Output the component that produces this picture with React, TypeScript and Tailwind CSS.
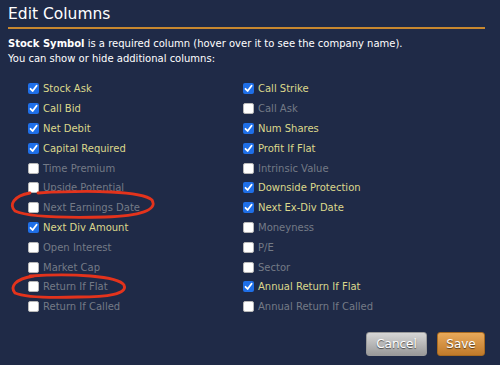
import React from 'react';

type Col = { label: string; on: boolean };

const left: Col[] = [
  { label: 'Stock Ask', on: true },
  { label: 'Call Bid', on: true },
  { label: 'Net Debit', on: true },
  { label: 'Capital Required', on: true },
  { label: 'Time Premium', on: false },
  { label: 'Upside Potential', on: false },
  { label: 'Next Earnings Date', on: false },
  { label: 'Next Div Amount', on: true },
  { label: 'Open Interest', on: false },
  { label: 'Market Cap', on: false },
  { label: 'Return If Flat', on: false },
  { label: 'Return If Called', on: false },
];

const right: Col[] = [
  { label: 'Call Strike', on: true },
  { label: 'Call Ask', on: false },
  { label: 'Num Shares', on: true },
  { label: 'Profit If Flat', on: true },
  { label: 'Intrinsic Value', on: false },
  { label: 'Downside Protection', on: true },
  { label: 'Next Ex-Div Date', on: true },
  { label: 'Moneyness', on: false },
  { label: 'P/E', on: false },
  { label: 'Sector', on: false },
  { label: 'Annual Return If Flat', on: true },
  { label: 'Annual Return If Called', on: false },
];

const Box = ({ on }: { on: boolean }) =>
  on ? (
    <span className="w-[11px] h-[11px] rounded-[2px] bg-[#1f6fe8] flex items-center justify-center shrink-0">
      <svg width="9" height="9" viewBox="0 0 9 9">
        <path d="M1.5 4.8 L3.6 7 L7.6 1.8" stroke="white" strokeWidth="1.8" fill="none" strokeLinecap="round" strokeLinejoin="round" />
      </svg>
    </span>
  ) : (
    <span className="w-[11px] h-[11px] rounded-[2px] bg-white border border-[#b8b8b8] shrink-0" />
  );

const Column = ({ items }: { items: Col[] }) => (
  <div className="flex flex-col">
    {items.map((c) => (
      <label key={c.label} className="h-[19.8px] flex items-center gap-[4px]">
        <Box on={c.on} />
        <span className={c.on ? 'text-[#dcd88c]' : 'text-[#747a86]'}>{c.label}</span>
      </label>
    ))}
  </div>
);

export default function App() {
  return (
    <div
      className="relative w-[500px] h-[365px] bg-[#1f2a47] overflow-hidden text-[10px]"
      style={{ fontFamily: '"DejaVu Sans", "Noto Sans", sans-serif' }}
    >
      <div className="px-[8px]">
        <h1 className="text-[15.5px] text-white pt-[3px] leading-[22px]">Edit Columns</h1>
        <div className="mt-[2px] h-[2px] bg-[#c8882f] w-[477px]" />
        <p className="mt-[8px] text-white leading-[14.5px]">
          <b>Stock Symbol</b> is a required column (hover over it to see the company name).
          <br />
          You can show or hide additional columns:
        </p>
      </div>

      <div className="grid grid-cols-[215px_1fr] pl-[28px] mt-[13px]">
        <Column items={left} />
        <Column items={right} />
      </div>

      <div className="flex justify-end gap-[10px] pr-[15px] mt-[15px]">
        <button className="w-[61px] h-[24px] rounded-[3px] border border-[#9a9a9a] bg-gradient-to-b from-[#d6d6d6] to-[#9a9a9a] text-white text-[12px] [text-shadow:0_1px_1px_rgba(0,0,0,0.6)]">
          Cancel
        </button>
        <button className="w-[48px] h-[24px] rounded-[3px] border border-[#a86a20] bg-gradient-to-b from-[#e8a95a] to-[#c07a2a] text-white text-[12px] [text-shadow:0_1px_1px_rgba(0,0,0,0.6)]">
          Save
        </button>
      </div>

      <svg className="absolute left-0 top-0 pointer-events-none" width="500" height="365">
        <path
          d="M38 193 C 90 190, 142 191, 152 200 C 158 210, 140 216, 105 217 C 65 218, 28 217, 15 211 C 9 205, 13 196, 30 193"
          stroke="#e3331c"
          strokeWidth="2.8"
          fill="none"
          strokeLinecap="round"
        />
        <path
          d="M30 276 C 72 273, 118 276, 124 285 C 128 294, 108 297, 78 297 C 48 298, 24 297, 15 293 C 10 287, 14 279, 34 276"
          stroke="#e3331c"
          strokeWidth="2.8"
          fill="none"
          strokeLinecap="round"
        />
      </svg>
    </div>
  );
}
